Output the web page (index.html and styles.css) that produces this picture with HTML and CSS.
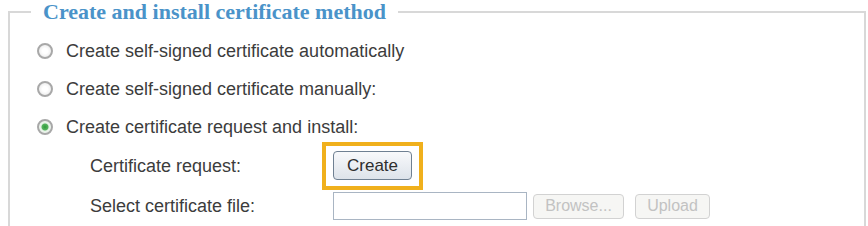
FILE: index.html
```html
<!DOCTYPE html>
<html lang="en">
<head>
  <meta charset="UTF-8">
  <title>Certificate Method</title>
  <link rel="stylesheet" href="styles.css">
</head>
<body>
  <fieldset class="method">
    <legend>Create and install certificate method</legend>

    <div class="row">
      <input type="radio" name="method" id="auto">
      <label for="auto">Create self-signed certificate automatically</label>
    </div>
    <div class="row">
      <input type="radio" name="method" id="manual">
      <label for="manual">Create self-signed certificate manually:</label>
    </div>
    <div class="row">
      <input type="radio" name="method" id="request" checked>
      <label for="request">Create certificate request and install:</label>
    </div>

    <div class="sub-row">
      <span class="sub-label">Certificate request:</span>
      <span class="highlight"><button class="btn">Create</button></span>
    </div>
    <div class="sub-row">
      <span class="sub-label">Select certificate file:</span>
      <input type="text" class="file-path">
      <button class="btn btn-browse" disabled>Browse...</button>
      <button class="btn btn-upload" disabled>Upload</button>
    </div>
  </fieldset>
</body>
</html>
```

FILE: styles.css
```css
body {
  margin: 0;
  padding: 0;
  background: #fff;
  font-family: "Liberation Sans", Arial, sans-serif;
  color: #3c3c3c;
}
.method {
  margin: 0 0 0 8px;
  width: 858px;
  padding: 0;
  border: 2px solid #d8d8d8;
  border-bottom: none;
  box-sizing: border-box;
}
.method legend {
  margin-left: 21px;
  padding: 0 12px;
  font-family: "Liberation Serif", "Times New Roman", serif;
  font-weight: bold;
  font-size: 22px;
  line-height: 24px;
  color: #4a93c9;
}
.row {
  display: flex;
  align-items: center;
  height: 38px;
  padding-left: 27px;
  font-size: 18px;
}
.row:first-of-type {
  margin-top: 8px;
}
.row input[type="radio"] {
  -webkit-appearance: none;
  appearance: none;
  width: 16px;
  height: 16px;
  margin: 0 13px 0 0;
  border: 2px solid #a8a8a8;
  border-radius: 50%;
  background: radial-gradient(circle, #ffffff 30%, #e4e4e4 100%);
}
.row input[type="radio"]:checked {
  background: radial-gradient(circle, #2f9a3a 0, #55b45e 3px, #e6f2e6 4px, #f8f8f8 100%);
}
.sub-row {
  display: flex;
  align-items: center;
  height: 40px;
  padding-left: 80px;
  font-size: 18px;
}
.sub-label {
  width: 243px;
}
.highlight {
  display: inline-block;
  margin-left: -11px;
  padding: 5px 7px 6px;
  border: 4px solid #f0b01c;
}
.btn {
  font-family: "Liberation Sans", Arial, sans-serif;
  font-size: 17px;
  color: #2e2e2e;
  height: 29px;
  width: 79px;
  padding: 0;
  border: 1px solid #6f8092;
  border-radius: 4px;
  background: linear-gradient(#f8f9fb, #dde3ea);
}
.file-path {
  width: 194px;
  height: 28px;
  box-sizing: border-box;
  margin: 0;
  border: 1px solid #a9b5c3;
}
.btn-browse,
.btn-upload {
  height: 25px;
  font-size: 16px;
  color: #c2c2c2;
  border: 1px solid #d2d2d2;
  background: #f6f6f4;
}
.btn-browse {
  width: 91px;
  margin-left: 6px;
}
.btn-upload {
  width: 75px;
  margin-left: 11px;
}
```
